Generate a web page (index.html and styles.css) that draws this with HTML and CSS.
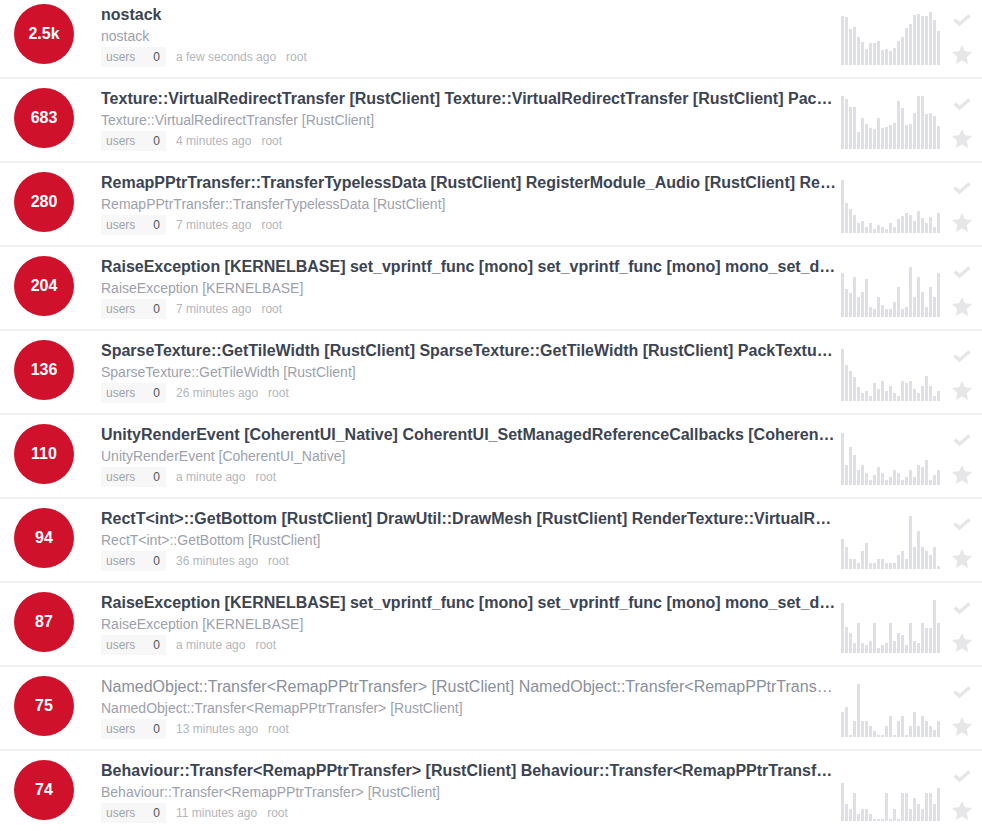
FILE: index.html
```html
<!DOCTYPE html>
<html lang="en">
<head>
    <meta charset="UTF-8">
    <meta name="viewport" content="width=device-width, initial-scale=1.0">
    <title>Issues</title>
    <link rel="stylesheet" href="styles.css">
</head>
<body>
    <ul class="issue-list">
        <li class="issue">
            <div class="count">2.5k</div>
            <div class="details">
                <h3 class="issue-title">nostack</h3>
                <div class="culprit">nostack</div>
                <div class="meta"><span class="tag">users<b>0</b></span><span>a few seconds ago</span><span>root</span></div>
            </div>
            <div class="spark" data-points="49,48,36,38,28,23,16,22,22,24,15,16,14,17,24,28,37,41,50,51,49,49,53,45,34"></div>
            <div class="actions">
                <svg class="icon-check" width="18" height="12" viewBox="0 0 18 12"><path d="M1.5 5.5 L6.5 10 L16.5 1.5" fill="none" stroke="currentColor" stroke-width="3.4"/></svg>
                <svg class="icon-star" width="20" height="19" viewBox="0 0 20 19"><polygon points="10,0 12.9,6.3 20,7.1 14.7,11.9 16.2,19 10,15.4 3.8,19 5.3,11.9 0,7.1 7.1,6.3" fill="currentColor"/></svg>
            </div>
        </li>
        <li class="issue">
            <div class="count">683</div>
            <div class="details">
                <h3 class="issue-title">Texture::VirtualRedirectTransfer [RustClient] Texture::VirtualRedirectTransfer [RustClient] PackTextureAtlasSimple [RustClient]</h3>
                <div class="culprit">Texture::VirtualRedirectTransfer [RustClient]</div>
                <div class="meta"><span class="tag">users<b>0</b></span><span>4 minutes ago</span><span>root</span></div>
            </div>
            <div class="spark" data-points="53,50,42,42,17,31,25,21,20,31,21,22,24,26,48,41,24,25,36,53,53,35,36,33,23"></div>
            <div class="actions">
                <svg class="icon-check" width="18" height="12" viewBox="0 0 18 12"><path d="M1.5 5.5 L6.5 10 L16.5 1.5" fill="none" stroke="currentColor" stroke-width="3.4"/></svg>
                <svg class="icon-star" width="20" height="19" viewBox="0 0 20 19"><polygon points="10,0 12.9,6.3 20,7.1 14.7,11.9 16.2,19 10,15.4 3.8,19 5.3,11.9 0,7.1 7.1,6.3" fill="currentColor"/></svg>
            </div>
        </li>
        <li class="issue">
            <div class="count">280</div>
            <div class="details">
                <h3 class="issue-title">RemapPPtrTransfer::TransferTypelessData [RustClient] RegisterModule_Audio [RustClient] RemapPPtrTransfer::TransferTypelessData [RustClient]</h3>
                <div class="culprit">RemapPPtrTransfer::TransferTypelessData [RustClient]</div>
                <div class="meta"><span class="tag">users<b>0</b></span><span>7 minutes ago</span><span>root</span></div>
            </div>
            <div class="spark" data-points="53,30,24,18,10,12,6,10,4,8,6,4,10,6,14,17,20,18,12,22,15,10,16,6,20"></div>
            <div class="actions">
                <svg class="icon-check" width="18" height="12" viewBox="0 0 18 12"><path d="M1.5 5.5 L6.5 10 L16.5 1.5" fill="none" stroke="currentColor" stroke-width="3.4"/></svg>
                <svg class="icon-star" width="20" height="19" viewBox="0 0 20 19"><polygon points="10,0 12.9,6.3 20,7.1 14.7,11.9 16.2,19 10,15.4 3.8,19 5.3,11.9 0,7.1 7.1,6.3" fill="currentColor"/></svg>
            </div>
        </li>
        <li class="issue">
            <div class="count">204</div>
            <div class="details">
                <h3 class="issue-title">RaiseException [KERNELBASE] set_vprintf_func [mono] set_vprintf_func [mono] mono_set_defaults [mono]</h3>
                <div class="culprit">RaiseException [KERNELBASE]</div>
                <div class="meta"><span class="tag">users<b>0</b></span><span>7 minutes ago</span><span>root</span></div>
            </div>
            <div class="spark" data-points="44,28,24,40,20,25,38,10,8,20,12,8,8,15,30,8,10,50,20,40,25,10,30,20,44"></div>
            <div class="actions">
                <svg class="icon-check" width="18" height="12" viewBox="0 0 18 12"><path d="M1.5 5.5 L6.5 10 L16.5 1.5" fill="none" stroke="currentColor" stroke-width="3.4"/></svg>
                <svg class="icon-star" width="20" height="19" viewBox="0 0 20 19"><polygon points="10,0 12.9,6.3 20,7.1 14.7,11.9 16.2,19 10,15.4 3.8,19 5.3,11.9 0,7.1 7.1,6.3" fill="currentColor"/></svg>
            </div>
        </li>
        <li class="issue">
            <div class="count">136</div>
            <div class="details">
                <h3 class="issue-title">SparseTexture::GetTileWidth [RustClient] SparseTexture::GetTileWidth [RustClient] PackTextureAtlasSimple [RustClient]</h3>
                <div class="culprit">SparseTexture::GetTileWidth [RustClient]</div>
                <div class="meta"><span class="tag">users<b>0</b></span><span>26 minutes ago</span><span>root</span></div>
            </div>
            <div class="spark" data-points="52,36,30,24,14,8,10,5,18,12,20,10,15,8,5,20,18,20,12,8,15,25,15,5,10"></div>
            <div class="actions">
                <svg class="icon-check" width="18" height="12" viewBox="0 0 18 12"><path d="M1.5 5.5 L6.5 10 L16.5 1.5" fill="none" stroke="currentColor" stroke-width="3.4"/></svg>
                <svg class="icon-star" width="20" height="19" viewBox="0 0 20 19"><polygon points="10,0 12.9,6.3 20,7.1 14.7,11.9 16.2,19 10,15.4 3.8,19 5.3,11.9 0,7.1 7.1,6.3" fill="currentColor"/></svg>
            </div>
        </li>
        <li class="issue">
            <div class="count">110</div>
            <div class="details">
                <h3 class="issue-title">UnityRenderEvent [CoherentUI_Native] CoherentUI_SetManagedReferenceCallbacks [CoherentUI_Native]</h3>
                <div class="culprit">UnityRenderEvent [CoherentUI_Native]</div>
                <div class="meta"><span class="tag">users<b>0</b></span><span>a minute ago</span><span>root</span></div>
            </div>
            <div class="spark" data-points="52,20,38,30,15,20,12,5,10,18,12,5,8,15,12,5,8,15,8,20,18,25,5,10,15"></div>
            <div class="actions">
                <svg class="icon-check" width="18" height="12" viewBox="0 0 18 12"><path d="M1.5 5.5 L6.5 10 L16.5 1.5" fill="none" stroke="currentColor" stroke-width="3.4"/></svg>
                <svg class="icon-star" width="20" height="19" viewBox="0 0 20 19"><polygon points="10,0 12.9,6.3 20,7.1 14.7,11.9 16.2,19 10,15.4 3.8,19 5.3,11.9 0,7.1 7.1,6.3" fill="currentColor"/></svg>
            </div>
        </li>
        <li class="issue">
            <div class="count">94</div>
            <div class="details">
                <h3 class="issue-title">RectT&lt;int&gt;::GetBottom [RustClient] DrawUtil::DrawMesh [RustClient] RenderTexture::VirtualRedirectTransfer [RustClient]</h3>
                <div class="culprit">RectT&lt;int&gt;::GetBottom [RustClient]</div>
                <div class="meta"><span class="tag">users<b>0</b></span><span>36 minutes ago</span><span>root</span></div>
            </div>
            <div class="spark" data-points="30,22,10,10,6,18,26,6,6,10,10,6,6,6,14,18,10,53,22,38,22,18,14,22,3"></div>
            <div class="actions">
                <svg class="icon-check" width="18" height="12" viewBox="0 0 18 12"><path d="M1.5 5.5 L6.5 10 L16.5 1.5" fill="none" stroke="currentColor" stroke-width="3.4"/></svg>
                <svg class="icon-star" width="20" height="19" viewBox="0 0 20 19"><polygon points="10,0 12.9,6.3 20,7.1 14.7,11.9 16.2,19 10,15.4 3.8,19 5.3,11.9 0,7.1 7.1,6.3" fill="currentColor"/></svg>
            </div>
        </li>
        <li class="issue">
            <div class="count">87</div>
            <div class="details">
                <h3 class="issue-title">RaiseException [KERNELBASE] set_vprintf_func [mono] set_vprintf_func [mono] mono_set_defaults [mono]</h3>
                <div class="culprit">RaiseException [KERNELBASE]</div>
                <div class="meta"><span class="tag">users<b>0</b></span><span>a minute ago</span><span>root</span></div>
            </div>
            <div class="spark" data-points="50,26,20,10,30,10,8,12,30,5,8,10,30,12,20,18,8,30,12,10,30,25,25,53,30"></div>
            <div class="actions">
                <svg class="icon-check" width="18" height="12" viewBox="0 0 18 12"><path d="M1.5 5.5 L6.5 10 L16.5 1.5" fill="none" stroke="currentColor" stroke-width="3.4"/></svg>
                <svg class="icon-star" width="20" height="19" viewBox="0 0 20 19"><polygon points="10,0 12.9,6.3 20,7.1 14.7,11.9 16.2,19 10,15.4 3.8,19 5.3,11.9 0,7.1 7.1,6.3" fill="currentColor"/></svg>
            </div>
        </li>
        <li class="issue seen">
            <div class="count">75</div>
            <div class="details">
                <h3 class="issue-title">NamedObject::Transfer&lt;RemapPPtrTransfer&gt; [RustClient] NamedObject::Transfer&lt;RemapPPtrTransfer&gt; [RustClient]</h3>
                <div class="culprit">NamedObject::Transfer&lt;RemapPPtrTransfer&gt; [RustClient]</div>
                <div class="meta"><span class="tag">users<b>0</b></span><span>13 minutes ago</span><span>root</span></div>
            </div>
            <div class="spark" data-points="25,30,2,16,53,16,16,11,6,2,2,11,21,2,16,21,2,11,25,11,21,16,11,7,16"></div>
            <div class="actions">
                <svg class="icon-check" width="18" height="12" viewBox="0 0 18 12"><path d="M1.5 5.5 L6.5 10 L16.5 1.5" fill="none" stroke="currentColor" stroke-width="3.4"/></svg>
                <svg class="icon-star" width="20" height="19" viewBox="0 0 20 19"><polygon points="10,0 12.9,6.3 20,7.1 14.7,11.9 16.2,19 10,15.4 3.8,19 5.3,11.9 0,7.1 7.1,6.3" fill="currentColor"/></svg>
            </div>
        </li>
        <li class="issue">
            <div class="count">74</div>
            <div class="details">
                <h3 class="issue-title">Behaviour::Transfer&lt;RemapPPtrTransfer&gt; [RustClient] Behaviour::Transfer&lt;RemapPPtrTransfer&gt; [RustClient]</h3>
                <div class="culprit">Behaviour::Transfer&lt;RemapPPtrTransfer&gt; [RustClient]</div>
                <div class="meta"><span class="tag">users<b>0</b></span><span>11 minutes ago</span><span>root</span></div>
            </div>
            <div class="spark" data-points="38,17,12,28,7,12,12,7,2,2,2,28,2,12,2,28,28,12,23,17,12,28,28,17,33"></div>
            <div class="actions">
                <svg class="icon-check" width="18" height="12" viewBox="0 0 18 12"><path d="M1.5 5.5 L6.5 10 L16.5 1.5" fill="none" stroke="currentColor" stroke-width="3.4"/></svg>
                <svg class="icon-star" width="20" height="19" viewBox="0 0 20 19"><polygon points="10,0 12.9,6.3 20,7.1 14.7,11.9 16.2,19 10,15.4 3.8,19 5.3,11.9 0,7.1 7.1,6.3" fill="currentColor"/></svg>
            </div>
        </li>
    </ul>

    <script>
        // sparkline bars from data-points
        document.querySelectorAll('.spark').forEach(function (spark) {
            spark.dataset.points.split(',').forEach(function (value) {
                const bar = document.createElement('span');
                bar.className = 'bar';
                bar.style.height = value + 'px';
                spark.appendChild(bar);
            });
        });
    </script>
</body>
</html>
```

FILE: styles.css
```css
html, body {
    overflow: hidden;
}

body {
    margin: 0;
    padding: 0;
    background: #fff;
    font-family: "Liberation Sans", Arial, sans-serif;
    color: #3c4452;
}

.issue-list {
    list-style: none;
    margin: -5px 0 0;
    padding: 0;
}

.issue {
    display: flex;
    align-items: flex-start;
    padding: 9px 10px 10px 14px;
    border-bottom: 2px solid #f1f1f5;
}

.count {
    flex: none;
    width: 60px;
    height: 60px;
    margin-right: 27px;
    border-radius: 50%;
    background: #d0112b;
    color: #fff;
    font-size: 16px;
    font-weight: bold;
    line-height: 60px;
    text-align: center;
}

.details {
    flex: 1;
    min-width: 0;
}

.issue-title {
    margin: 0;
    font-size: 16px;
    font-weight: bold;
    line-height: 22px;
    color: #3c4452;
    white-space: nowrap;
    overflow: hidden;
    text-overflow: ellipsis;
}

.seen .issue-title {
    font-weight: normal;
    color: #8a909b;
}

.culprit {
    font-size: 14px;
    line-height: 20px;
    color: #9ca1ac;
    white-space: nowrap;
    overflow: hidden;
    text-overflow: ellipsis;
}

.meta {
    display: flex;
    margin-top: 1px;
    font-size: 12px;
    line-height: 20px;
    color: #b3b6bc;
}

.meta span {
    margin-right: 10px;
}

.meta .tag {
    padding: 0 6px 0 5px;
    background: #f7f7f7;
    color: #a0a4ab;
}

.tag b {
    margin-left: 18px;
    font-weight: normal;
    color: #4e5560;
}

.spark {
    flex: none;
    display: flex;
    align-items: flex-end;
    gap: 1px;
    width: 100px;
    height: 55px;
    margin: 6px 0 0 5px;
}

.bar {
    width: 3px;
    background: #dfe0e6;
}

.actions {
    flex: none;
    display: flex;
    flex-direction: column;
    align-items: center;
    gap: 19px;
    width: 20px;
    margin-left: 11px;
    padding-top: 10px;
    color: #e6e6e9;
}

.actions svg {
    display: block;
}
```
